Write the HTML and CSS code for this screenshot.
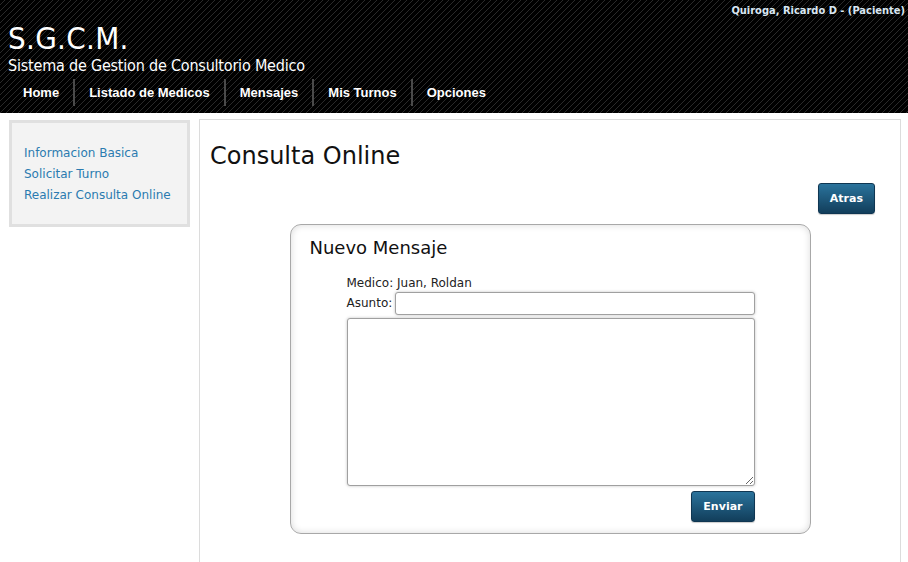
FILE: index.html
```html
<!DOCTYPE html>
<html lang="es">
<head>
<meta charset="utf-8">
<title>S.G.C.M.</title>
<link rel="stylesheet" href="styles.css">
</head>
<body>
<header class="top">
  <div class="user">Quiroga, Ricardo D - (Paciente)</div>
  <h1 class="brand">S.G.C.M.</h1>
  <div class="subtitle">Sistema de Gestion de Consultorio Medico</div>
  <nav class="menu">
    <a class="menu-item" href="#">Home</a>
    <a class="menu-item" href="#">Listado de Medicos</a>
    <a class="menu-item" href="#">Mensajes</a>
    <a class="menu-item" href="#">Mis Turnos</a>
    <a class="menu-item" href="#">Opciones</a>
  </nav>
</header>
<div class="page">
  <aside class="side">
    <a class="side-link" href="#">Informacion Basica</a>
    <a class="side-link" href="#">Solicitar Turno</a>
    <a class="side-link" href="#">Realizar Consulta Online</a>
  </aside>
  <main class="content">
    <h2 class="title">Consulta Online</h2>
    <div class="actions"><button class="btn">Atras</button></div>
    <section class="msgbox">
      <h3 class="msg-title">Nuevo Mensaje</h3>
      <div class="form">
        <div class="row">Medico: Juan, Roldan</div>
        <div class="row asunto"><label>Asunto:</label><input class="field" type="text"></div>
        <textarea class="area"></textarea>
        <div class="send"><button class="btn btn-send">Enviar</button></div>
      </div>
    </section>
  </main>
</div>
</body>
</html>
```

FILE: styles.css
```css
html, body {
  margin: 0;
  padding: 0;
  background: #fff;
  font-family: "DejaVu Sans", Verdana, sans-serif;
}
.top {
  height: 113px;
  box-sizing: border-box;
  background-color: #000;
  background-image: repeating-linear-gradient(135deg, #000 0, #000 3.3px, #2a2a2a 3.3px, #2a2a2a 4.24px);
  color: #fff;
  display: flex;
  flex-direction: column;
  padding: 0 3px 0 8px;
}
.user {
  align-self: flex-end;
  margin-top: 4px;
  font-family: "DejaVu Sans Condensed", "DejaVu Sans", sans-serif;
  font-weight: bold;
  font-size: 11px;
  line-height: 14px;
  color: #d8e6f2;
}
.brand {
  margin: 3px 0 0 0;
  font-family: "DejaVu Sans Condensed", "DejaVu Sans", sans-serif;
  font-weight: normal;
  font-size: 31px;
  line-height: 34px;
  letter-spacing: 0.3px;
  color: #fff;
}
.subtitle {
  font-family: "DejaVu Sans Condensed", "DejaVu Sans", sans-serif;
  font-size: 16px;
  line-height: 18px;
  letter-spacing: -0.2px;
  color: #fff;
  margin-top: 2px;
}
.menu {
  display: flex;
  margin-top: 4px;
  height: 27px;
}
.menu-item {
  font-family: "Liberation Sans", Arial, sans-serif;
  font-weight: bold;
  font-size: 13px;
  line-height: 27px;
  color: #fff;
  text-decoration: none;
  padding: 0 14px;
  border-left: 2px solid #4a4a4a;
}
.menu-item:first-child {
  border-left: none;
  padding-left: 15px;
}
.page {
  display: flex;
  align-items: flex-start;
  gap: 9px;
  padding: 6px 7px 0 9px;
}
.side {
  flex: none;
  margin-top: 1px;
  background: #f3f3f3;
  border: 3px solid #e0e0e0;
  padding: 20px 12px 18px 12px;
  box-sizing: border-box;
  width: 181px;
  display: flex;
  flex-direction: column;
}
.side-link {
  font-size: 12px;
  line-height: 21px;
  color: #2b7bb0;
  text-decoration: none;
}
.content {
  flex: 1;
  border: 1px solid #dcdcdc;
  border-bottom: none;
  min-height: 450px;
  padding: 0 0 20px 0;
}
.title {
  margin: 22px 0 0 10px;
  font-size: 24px;
  font-weight: normal;
  line-height: 28px;
  color: #111;
}
.actions {
  display: flex;
  justify-content: flex-end;
  margin-top: 13px;
  padding-right: 25px;
}
.btn {
  font-family: "DejaVu Sans", sans-serif;
  font-weight: bold;
  font-size: 11px;
  color: #fff;
  background: linear-gradient(#2a739c, #123e5b);
  border: 1px solid #0f3652;
  border-radius: 3px;
  height: 31px;
  padding: 0 11px;
  box-shadow: 0 1px 1px rgba(0,0,0,0.2);
}
.msgbox {
  width: 521px;
  box-sizing: border-box;
  margin: 10px auto 0 auto;
  border: 1px solid #a8a8a8;
  border-radius: 11px;
  box-shadow: inset 0 0 7px rgba(0,0,0,0.15);
  padding: 12px 19px 11px 19px;
}
.msg-title {
  margin: 0;
  font-size: 18px;
  font-weight: normal;
  line-height: 22px;
  color: #111;
}
.form {
  margin: 17px 0 0 37px;
  width: 408px;
  display: flex;
  flex-direction: column;
}
.row {
  font-size: 12px;
  line-height: 15px;
  color: #222;
}
.asunto {
  display: flex;
  align-items: center;
  margin-top: 1px;
}
.field {
  margin-left: 3px;
  flex: 1;
  height: 23px;
  box-sizing: border-box;
  border: 1px solid #a0a0a0;
  border-radius: 3px;
  box-shadow: 0 0 3px rgba(0,0,0,0.25);
  padding: 2px 4px;
}
.area {
  margin-top: 3px;
  height: 168px;
  box-sizing: border-box;
  border: 1px solid #a0a0a0;
  border-radius: 3px;
  box-shadow: 0 0 3px rgba(0,0,0,0.25);
  width: 408px;
}
.send {
  display: flex;
  justify-content: flex-end;
  margin-top: 5px;
}
.btn-send {
  height: 31px;
  padding: 0 11px;
}
```
